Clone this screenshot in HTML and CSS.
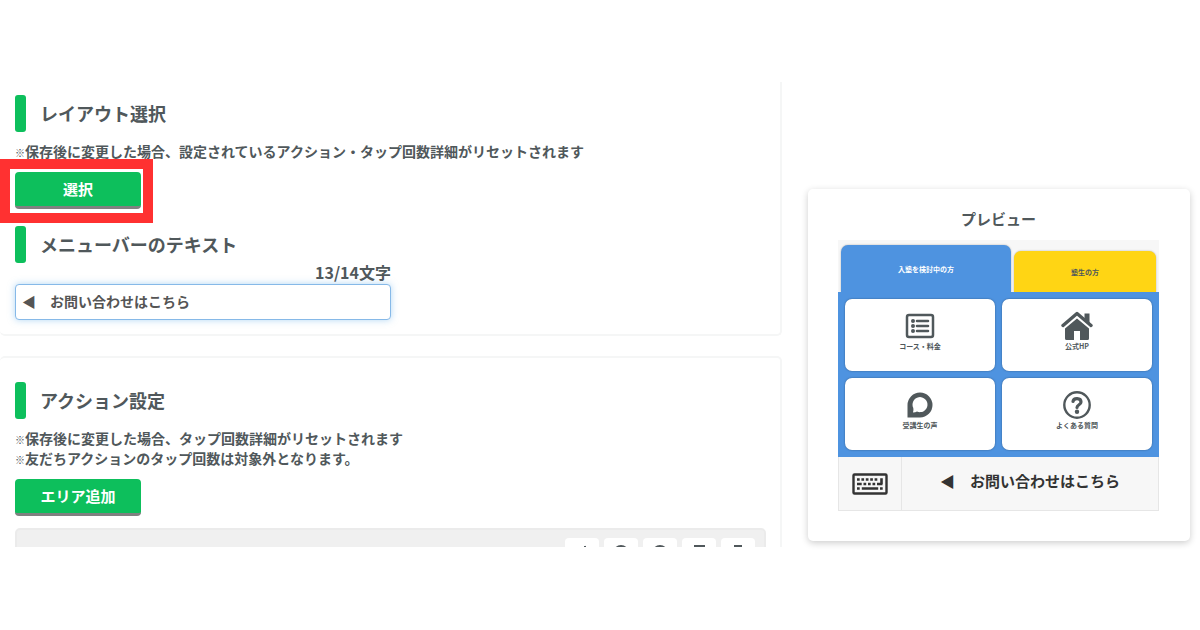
FILE: index.html
```html
<!DOCTYPE html>
<html lang="ja">
<head>
    <meta charset="UTF-8">
    <meta name="viewport" content="width=device-width, initial-scale=1.0">
    <title>リッチメニュー設定</title>
    <link rel="stylesheet" href="styles.css">
</head>
<body>
    <div class="editor">
        <main class="settings">
            <section class="panel panel-layout">
                <h2 class="heading">レイアウト選択</h2>
                <p class="note"><span class="mark">※</span>保存後に変更した場合、設定されているアクション・タップ回数詳細がリセットされます</p>
                <div class="highlight">
                    <button type="button" class="btn">選択</button>
                </div>
                <h2 class="heading heading-bar"><label for="barText">メニューバーのテキスト</label></h2>
                <div class="bar-field">
                    <p class="counter">13/14文字</p>
                    <input type="text" id="barText" class="text-input" maxlength="14" value="◀　お問い合わせはこちら">
                </div>
            </section>

            <section class="panel panel-action">
                <h2 class="heading">アクション設定</h2>
                <p class="note"><span class="mark">※</span>保存後に変更した場合、タップ回数詳細がリセットされます<br><span class="mark">※</span>友だちアクションのタップ回数は対象外となります。</p>
                <button type="button" class="btn">エリア追加</button>
                <div class="area-box">
                    <button type="button" class="tool" aria-label="編集">
                        <svg viewBox="0 0 16 16"><path d="M5 6l6-4 3 4M11 1v14"/></svg>
                    </button>
                    <button type="button" class="tool" aria-label="上へ">
                        <svg viewBox="0 0 16 16"><circle cx="8" cy="8" r="7"/><path d="M4 10l4-4 4 4"/></svg>
                    </button>
                    <button type="button" class="tool" aria-label="下へ">
                        <svg viewBox="0 0 16 16"><circle cx="8" cy="8" r="7"/><path d="M4 6l4 4 4-4"/></svg>
                    </button>
                    <button type="button" class="tool" aria-label="コピー">
                        <svg viewBox="0 0 16 16"><path d="M4 1h9v10H4zM4 4H2v11h8v-4"/></svg>
                    </button>
                    <button type="button" class="tool" aria-label="削除">
                        <svg viewBox="0 0 16 16"><path d="M5 4V1h6v3M1 4h14M3 4l1 11h8l1-11"/></svg>
                    </button>
                </div>
            </section>
        </main>

        <aside class="preview">
            <h2 class="preview-title">プレビュー</h2>
            <div class="rich-menu">
                <div class="tabs">
                    <button type="button" class="tab tab-blue">入塾を検討中の方</button>
                    <button type="button" class="tab tab-yellow">塾生の方</button>
                </div>
                <nav class="areas">
                    <a href="#" class="area">
                        <svg viewBox="0 0 32 32">
                            <rect x="3" y="5" width="26" height="22" rx="2" fill="none" stroke="currentColor" stroke-width="2.500"/>
                            <circle cx="9" cy="11" r="2"/><circle cx="9" cy="16" r="2"/><circle cx="9" cy="21" r="2"/>
                            <path d="M13 11h11M13 16h11M13 21h11" stroke="currentColor" stroke-width="2.600" stroke-linecap="round"/>
                        </svg>
                        コース・料金
                    </a>
                    <a href="#" class="area">
                        <svg viewBox="0 0 32 32">
                            <path d="M2 15.500L16 3.500L30 15.500" fill="none" stroke="currentColor" stroke-width="3.400" stroke-linecap="round" stroke-linejoin="round"/>
                            <path d="M23.500 3.500h5v11l-5-4z"/>
                            <path d="M16 8.500L28 18.500v10q0 1.500-1.500 1.500H19v-9h-6v9H5.500Q4 30 4 28.500V18.500z"/>
                        </svg>
                        公式HP
                    </a>
                    <a href="#" class="area">
                        <svg viewBox="0 0 32 32">
                            <path fill-rule="evenodd" d="M3.500 28.500V16A12.500 12.500 0 1 1 16 28.500zM9 23.500q2.500 0 4-1A7.500 7.500 0 1 0 9.300 19Q9.800 21.500 9 23.500z"/>
                        </svg>
                        受講生の声
                    </a>
                    <a href="#" class="area">
                        <svg viewBox="0 0 32 32">
                            <circle cx="16" cy="16" r="12.700" fill="none" stroke="currentColor" stroke-width="2.400"/>
                            <path d="M12 12.500C12.500 8.500 20 8.500 20 13C20 16 16 15.500 16 18.500" fill="none" stroke="currentColor" stroke-width="3.200" stroke-linecap="round"/>
                            <circle cx="16" cy="22.800" r="2.200"/>
                        </svg>
                        よくある質問
                    </a>
                </nav>
                <div class="menu-bar">
                    <button type="button" class="keyboard" aria-label="キーボード">
                        <svg viewBox="0 0 36 22">
                            <rect x="1.500" y="1.500" width="33" height="19" rx="1" fill="none" stroke="currentColor" stroke-width="2.400"/>
                            <path d="M5 6.500h2.700M9.400 6.500h2.700M13.800 6.500h2.700M18.200 6.500h2.700M22.600 6.500h2.700M5 11h4.700M11.500 11h2.700M16 11h2.700M20.500 11h2.700M25 11h5.500M29.500 5.200V11M5 15.500h2.700M9.800 15.500h16.400M28 15.500h2.700" stroke="currentColor" stroke-width="2.600" fill="none"/>
                        </svg>
                    </button>
                    <button type="button" class="bar-label">◀　お問い合わせはこちら</button>
                </div>
            </div>
        </aside>
    </div>
</body>
</html>
```

FILE: styles.css
```css
* {
    box-sizing: border-box;
}

body {
    margin: 0;
    padding: 82px 0;
    background-color: #fff;
    color: #50585b;
    font-family: "Noto Sans CJK JP", sans-serif;
    font-weight: bold;
    font-size: 14px;
    line-height: 20px;
}

h2, p {
    margin: 0;
}

button, input {
    font: inherit;
    color: inherit;
}

button {
    cursor: pointer;
}

.editor {
    display: grid;
    grid-template-columns: minmax(0, 1fr) 382px;
    gap: 26px;
    height: calc(100vh - 165px);
    padding-right: 10px;
}

/* left column */
.settings {
    display: flex;
    flex-direction: column;
    gap: 20px;
    overflow: hidden;
}

.panel {
    flex-shrink: 0;
    padding: 24px 14px 14px 15px;
    border: 2px solid #f5f6f6;
    border-left: none;
    border-radius: 5px;
}

.panel-layout {
    padding-top: 13px;
    border-top: none;
    border-top-right-radius: 0;
}

.heading {
    display: flex;
    align-items: center;
    gap: 14px;
    margin-bottom: 9px;
    font-size: 18px;
    line-height: 37px;
}

.heading::before {
    content: "";
    width: 11px;
    height: 37px;
    border-radius: 3px;
    background-color: #0dbf5c;
}

.heading-bar {
    margin: 17px 0 0;
}

.note {
    margin-bottom: 11px;
}

.mark {
    font-size: 10px;
    line-height: 10px;
}

.btn {
    display: block;
    width: 126px;
    height: 37px;
    padding: 0;
    border: none;
    border-bottom: 3px solid #808080;
    border-radius: 4px;
    background-color: #0dbf5c;
    color: #fff;
    font-size: 15px;
}

/* red frame drawn over the select button */
.highlight {
    position: relative;
    width: 126px;
}

.highlight::after {
    content: "";
    position: absolute;
    inset: -13px -12px -14px -15px;
    border: 10px solid #ff3131;
    pointer-events: none;
}

.bar-field {
    width: 376px;
}

.counter {
    margin-bottom: 3px;
    font-size: 16px;
    line-height: 18px;
    text-align: right;
}

.text-input {
    display: block;
    width: 100%;
    height: 36px;
    padding: 0 6px 3px;
    border: 1px solid #86b9e8;
    border-radius: 4px;
    outline: none;
    background-color: #fff;
    color: #555;
    box-shadow: 0 0 7px rgba(102, 175, 233, 0.5);
}

.area-box {
    display: flex;
    justify-content: flex-end;
    gap: 5px;
    margin-top: 12px;
    padding: 8px 9px;
    border: 2px solid #ebebeb;
    border-radius: 5px;
    background-color: #f0f0f0;
}

.tool {
    display: flex;
    align-items: flex-start;
    justify-content: center;
    width: 34px;
    height: 32px;
    padding: 7px 0 0;
    border: none;
    border-radius: 4px;
    background-color: #fff;
}

.tool svg {
    width: 16px;
    height: 16px;
    fill: none;
    stroke: currentColor;
    stroke-width: 2;
}

/* right column */
.preview {
    align-self: end;
    margin-bottom: 6px;
    padding: 20px 31px 30px 30px;
    border-radius: 5px;
    background-color: #fff;
    box-shadow: 0 2px 7px rgba(0, 0, 0, 0.2);
}

.preview-title {
    margin-bottom: 11px;
    font-size: 15px;
    line-height: 20px;
    text-align: center;
}

.tabs {
    display: flex;
    align-items: flex-end;
    gap: 3px;
    padding: 5px 3px 0;
    background-color: #f7f7f7;
}

.tab {
    flex: 142;
    height: 41px;
    padding: 0;
    border: none;
    border-radius: 7px 7px 0 0;
    font-size: 7px;
    line-height: 8px;
    box-shadow: 0 0 2px rgba(0, 0, 0, 0.3);
}

.tab-blue {
    flex: 170;
    height: 47px;
    background-color: #4e93e0;
    color: #fff;
}

.tab-yellow {
    background-color: #ffd514;
}

.areas {
    position: relative;
    display: grid;
    grid-template-columns: 1fr 1fr;
    gap: 7px;
    padding: 7px;
    background-color: #4e93e0;
}

.area {
    display: flex;
    flex-direction: column;
    align-items: center;
    height: 72px;
    padding-top: 11px;
    border-radius: 7px;
    background-color: #fff;
    color: inherit;
    font-size: 7px;
    line-height: 8px;
    text-decoration: none;
    box-shadow: 0 0 2px rgba(0, 0, 0, 0.4);
}

.area svg {
    width: 32px;
    height: 32px;
    fill: currentColor;
}

.menu-bar {
    display: flex;
    height: 54px;
    border: 1px solid #e6e6e6;
    border-top: none;
    background-color: #f7f7f7;
    color: #333;
}

.menu-bar button {
    padding: 0;
    border: none;
    background: none;
}

.menu-bar .keyboard {
    display: flex;
    align-items: center;
    justify-content: center;
    width: 63px;
    border-right: 1px solid #e6e6e6;
}

.keyboard svg {
    width: 36px;
    height: 22px;
}

.menu-bar .bar-label {
    flex: 1;
    padding-bottom: 5px;
    font-size: 15px;
}
```
